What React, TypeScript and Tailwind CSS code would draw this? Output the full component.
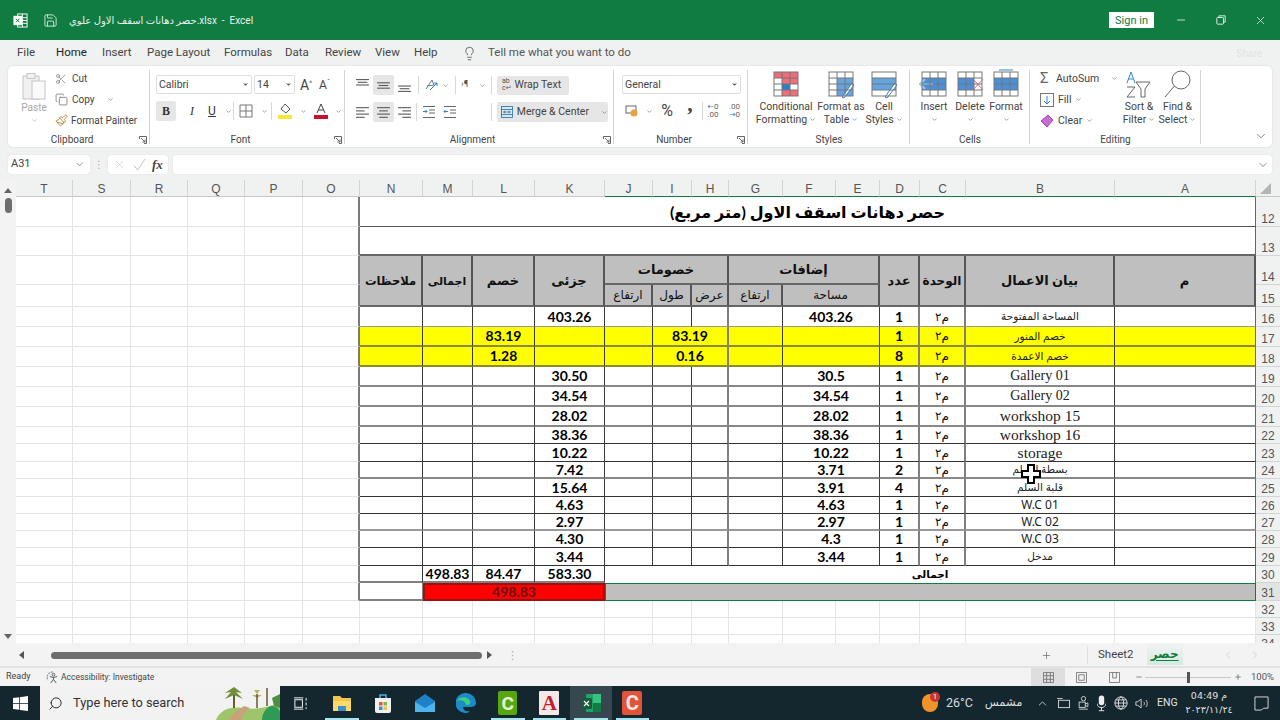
import { ReactNode } from 'react';
import { ChevronDown, ChevronLeft, ChevronRight, Copy, Lightbulb, Minus, Paintbrush, Plus, Save, Scissors, Search, X } from 'lucide-react';

function Dd({ className = '' }: { className?: string }) {
  return <ChevronDown className={'w-[7px] h-[7px] text-[#666] shrink-0 ' + className} strokeWidth={2} />;
}

function Group({ label, width, launcher, children }: { label: string; width: string; launcher?: boolean; children: ReactNode }) {
  return (
    <div className={width + ' relative flex flex-col shrink-0 h-[79px] mt-[2px]'}>
      <div className="flex-1 min-h-0">{children}</div>
      <div className={'h-[14px] flex items-center justify-center text-[10px] leading-none text-[#444] ' + (launcher ? 'pr-[14px]' : '')}>{label}</div>
      <div className="absolute right-0 top-[2px] bottom-[3px] w-px bg-[#d4d4d4]" />
      {launcher && (
        <svg viewBox="0 0 8 8" className="absolute right-[3px] bottom-[3px] w-[8px] h-[8px] text-[#666]" fill="none" stroke="currentColor">
          <path d="M.5 3V.5h7v7H5M2 2l4 4M6 3.5V6H3.5" />
        </svg>
      )}
    </div>
  );
}

function AlignLines({ kind, v = 'c' }: { kind: 'l' | 'c' | 'r'; v?: 't' | 'm' | 'b' | 'c' }) {
  const x = (w: number) => (kind === 'l' ? 1 : kind === 'c' ? 7 - w / 2 : 13 - w);
  const y0 = v === 't' ? 1 : v === 'm' ? 4 : v === 'b' ? 7 : 2;
  return (
    <svg viewBox="0 0 14 14" className="w-[15px] h-[15px] text-[#555]" stroke="currentColor" fill="none">
      {(v === 'c' ? [12, 8, 12, 8] : [12, 9, 12]).map((w, i) => (
        <path key={i} d={'M' + x(w) + ' ' + (y0 + 0.5 + i * (v === 'c' ? 3 : 2.5)) + 'h' + w} />
      ))}
    </svg>
  );
}

function MiniTable({ children, cols = 3 }: { children?: ReactNode; cols?: number }) {
  return (
    <svg viewBox="0 0 30 30" className="w-[30px] h-[30px]">
      {children}
      <g fill="none" stroke="#777">
        <rect x="3" y="3" width="24" height="24" />
        {cols === 3 && <path d="M11 3v24M19 3v24" />}
        <path d="M3 9h24M3 15h24M3 21h24" />
      </g>
    </svg>
  );
}

function Clipboard() {
  return (
    <Group label="Clipboard" width="w-[142px]" launcher>
      <div className="flex">
        <div className="w-[52px] -mr-[5px] flex flex-col items-center pt-[4px]">
          <svg viewBox="0 0 24 28" className="w-[24px] h-[28px]" fill="#f1f1f1" stroke="#c4c4c4">
            <rect x="1" y="4" width="16" height="23" />
            <rect x="5" y="1.5" width="8" height="5" />
            <rect x="10" y="9" width="13" height="18" fill="#fafafa" />
          </svg>
          <span className="text-[10px] leading-none mt-[3px] text-[#a8a8a8]">Paste</span>
          <Dd className="mt-[4px] text-[#aaa]" />
        </div>
        <div className="text-[10px] text-[#444]">
          <div className="h-[21px] flex items-center gap-[5px]"><Scissors className="w-[12px] h-[12px] text-[#666]" strokeWidth={1.2} />Cut</div>
          <div className="h-[21px] flex items-center gap-[4px]"><Copy className="w-[13px] h-[13px] text-[#555]" strokeWidth={1.2} />Copy<Dd className="ml-[8px]" /></div>
          <div className="h-[21px] flex items-center gap-[3px]"><Paintbrush className="w-[13px] h-[13px] text-[#b07a20]" strokeWidth={1.5} />Format Painter</div>
        </div>
      </div>
    </Group>
  );
}

function IconCell({ width = 'w-[21px]', on, children }: { width?: string; on?: boolean; children: ReactNode }) {
  return <div className={width + ' h-[20px] flex items-center justify-center rounded-[2px] shrink-0 ' + (on ? 'bg-[#e6e6e6]' : '')}>{children}</div>;
}

function FontGroup() {
  return (
    <Group label="Font" width="w-[195px]" launcher>
      <div className="pl-[6px] pt-[7px]">
        <div className="flex items-center h-[19px]">
          <div className="w-[96px] h-[19px] border border-[#dedede] rounded-[2px] flex items-center justify-between px-[2px] text-[10.5px] text-[#444]">Calibri<ChevronDown className="w-[7px] h-[7px] fill-[#555]" /></div>
          <div className="ml-[2px] w-[41px] h-[19px] border border-[#dedede] rounded-[2px] flex items-center justify-between px-[2px] text-[10.5px] text-[#444]">14<ChevronDown className="w-[7px] h-[7px] fill-[#555]" /></div>
          <span className="ml-[5px] text-[14px] leading-none text-[#444]">A<sup className="text-[7px]">^</sup></span>
          <span className="ml-[7px] text-[12px] leading-none text-[#444]">A<sup className="text-[7px]">ˇ</sup></span>
        </div>
        <div className="flex items-center h-[20px] mt-[7px] text-[12px] text-[#333]">
          <IconCell width="w-[20px]" on><span className="font-bold font-['Liberation_Serif',serif]">B</span></IconCell>
          <IconCell width="w-[22px]"><span className="italic ml-[10px] font-['Liberation_Serif',serif]">I</span></IconCell>
          <IconCell width="w-[20px]"><span className="underline ml-[8px]">U</span></IconCell>
          <IconCell width="w-[14px]"><Dd className="ml-[6px]" /></IconCell>
          <div className="w-px h-[18px] ml-[1px] bg-[#d8d8d8]" />
          <IconCell width="w-[24px]">
            <svg viewBox="0 0 14 14" className="w-[14px] h-[14px]" fill="none" stroke="#777"><path d="M1 1h12v12H1zM7 1v12M1 7h12" /></svg>
          </IconCell>
          <IconCell width="w-[12px]"><Dd /></IconCell>
          <div className="w-px h-[18px] ml-[1px] bg-[#d8d8d8]" />
          <IconCell width="w-[26px]">
            <svg viewBox="0 0 14 16" className="w-[14px] h-[16px]"><path d="M7 1l5 5-4 4-5-4z" fill="none" stroke="#555" /><rect y="12" width="14" height="4" fill="#f5e836" /></svg>
          </IconCell>
          <IconCell width="w-[10px]"><Dd /></IconCell>
          <IconCell width="w-[26px]">
            <svg viewBox="0 0 14 16" className="w-[14px] h-[16px]"><path d="M3 10L7 1l4 9M4.5 7h5" fill="none" stroke="#444" /><rect y="12" width="14" height="4" fill="#c8102e" /></svg>
          </IconCell>
          <IconCell width="w-[8px]"><Dd /></IconCell>
        </div>
      </div>
    </Group>
  );
}

function Alignment() {
  return (
    <Group label="Alignment" width="w-[269px]" launcher>
      <div className="flex pl-[7px] pt-[7px]">
        <div>
          <div className="flex items-center h-[20px]">
            <IconCell><AlignLines kind="c" v="t" /></IconCell>
            <IconCell on><AlignLines kind="c" v="m" /></IconCell>
            <IconCell><AlignLines kind="c" v="b" /></IconCell>
            <div className="w-px h-[18px] bg-[#d8d8d8] mx-[3px]" />
            <IconCell width="w-[18px]">
              <svg viewBox="0 0 14 14" className="w-[14px] h-[14px]" fill="none"><path d="M2 11L8 2l2 5-7 1" stroke="#777" /><path d="M6 12l7-7M10 5h3v3" stroke="#2b88c8" /></svg>
            </IconCell>
            <IconCell width="w-[10px]"><Dd /></IconCell>
            <div className="w-px h-[18px] bg-[#d8d8d8] mx-[5px]" />
            <span className="text-[9px] w-[18px] text-[#555]">›¶</span>
            <Dd />
            <div className="w-px h-[18px] bg-[#d8d8d8] ml-[5px] mr-[5px]" />
            <div className="w-[72px] h-[19px] bg-[#e6e6e6] rounded-[2px] flex items-center pl-[5px] gap-[3px] text-[10.5px] text-[#444] whitespace-nowrap">
              <span className="text-[7px] leading-[7px] text-[#555]">ab<br />c↵</span>Wrap Text
            </div>
          </div>
          <div className="flex items-center h-[20px] mt-[7px]">
            <IconCell><AlignLines kind="l" /></IconCell>
            <IconCell on><AlignLines kind="c" /></IconCell>
            <IconCell><AlignLines kind="r" /></IconCell>
            <div className="w-px h-[18px] bg-[#d8d8d8] mx-[1px]" />
            <IconCell>
              <svg viewBox="0 0 14 14" className="w-[14px] h-[14px]" fill="none"><path d="M1 1.5h12M7 5h6M7 8h6M1 12.5h12" stroke="#666" /><path d="M1 6.5h4M3.5 5l1.5 1.5L3.5 8" stroke="#2b88c8" /></svg>
            </IconCell>
            <IconCell>
              <svg viewBox="0 0 14 14" className="w-[14px] h-[14px]" fill="none"><path d="M1 1.5h12M7 5h6M7 8h6M1 12.5h12" stroke="#666" /><path d="M5 6.5H1M2.5 5L1 6.5 2.5 8" stroke="#2b88c8" /></svg>
            </IconCell>
            <div className="w-px h-[18px] bg-[#d8d8d8] ml-[31px] mr-[5px]" />
            <div className="w-[111px] h-[20px] bg-[#e6e6e6] rounded-[2px] flex items-center pl-[4px] gap-[4px] text-[10.5px] text-[#444] whitespace-nowrap">
              <svg viewBox="0 0 14 14" className="w-[14px] h-[14px]" fill="none" stroke="#1f78b4"><rect x=".5" y=".5" width="13" height="13" /><path d="M.5 4h13M.5 10h13M3 7h8M3 7l2-1.5M3 7l2 1.5M11 7L9 5.5M11 7L9 8.5" /></svg>
              Merge &amp; Center<Dd className="ml-[8px]" />
            </div>
          </div>
        </div>
      </div>
    </Group>
  );
}

function NumberGroup() {
  return (
    <Group label="Number" width="w-[134px]" launcher>
      <div className="pl-[8px] pt-[7px]">
        <div className="w-[119px] h-[19px] border border-[#dedede] rounded-[2px] flex items-center justify-between px-[2px] text-[10.5px] text-[#444]">General<ChevronDown className="w-[7px] h-[7px] fill-[#555]" /></div>
        <div className="flex items-center h-[20px] mt-[7px] text-[#444]">
          <IconCell width="w-[20px]">
            <svg viewBox="0 0 14 14" className="w-[14px] h-[14px]" fill="none"><rect x="1" y="2" width="10" height="7" stroke="#666" /><circle cx="9" cy="9" r="3.5" fill="#e9a13b" /></svg>
          </IconCell>
          <IconCell width="w-[14px]"><Dd /></IconCell>
          <IconCell width="w-[22px]"><span className="text-[16px] leading-none">%</span></IconCell>
          <IconCell width="w-[24px]"><span className="text-[22px] -mt-[14px] font-bold leading-none font-['Liberation_Serif',serif]">,</span></IconCell>
          <div className="w-px h-[18px] bg-[#d8d8d8]" />
          <IconCell width="w-[20px]"><span className="text-[8px] leading-[8px] text-center text-[#666]"><span className="text-[#2b88c8]">←</span>0<br />.00</span></IconCell>
          <IconCell width="w-[23px]"><span className="text-[8px] leading-[8px] text-center text-[#666]">.00<br /><span className="text-[#2b88c8]">→</span>0</span></IconCell>
        </div>
      </div>
    </Group>
  );
}

function BigBtn({ width, icon, l1, l2, dd }: { width: string; icon: ReactNode; l1: string; l2?: string; dd?: boolean }) {
  return (
    <div className={width + ' flex flex-col items-center text-[10.5px] leading-[13px] text-[#444] shrink-0'}>
      <div className="h-[30px] flex items-center">{icon}</div>
      <div className="mt-[1px] whitespace-nowrap">{l1}</div>
      <div className="flex items-center gap-[2px] h-[13px]">{l2}{dd && <Dd />}</div>
    </div>
  );
}

function Styles() {
  return (
    <Group label="Styles" width="w-[162px]">
      <div className="flex pl-[4px] pt-[1px]">
        <BigBtn width="w-[68px]" l1="Conditional" l2="Formatting" dd icon={
          <MiniTable><rect x="3" y="3" width="24" height="6" fill="#ef6d78" /><rect x="11" y="9" width="16" height="6" fill="#ef6d78" /><rect x="11" y="15" width="8" height="6" fill="#2b7cd3" /><rect x="11" y="21" width="16" height="6" fill="#ef6d78" /></MiniTable>
        } />
        <BigBtn width="w-[42px]" l1="Format as" l2="Table" dd icon={
          <MiniTable><rect x="11" y="9" width="16" height="18" fill="#64a5e0" /><path d="M16 28l10-14 2 2-10 13z" fill="#fff" stroke="#3d7dbb" /></MiniTable>
        } />
        <BigBtn width="w-[44px]" l1="Cell" l2="Styles" dd icon={
          <MiniTable cols={0}><rect x="3" y="9" width="24" height="12" fill="#64a5e0" /><path d="M16 28l10-14 2 2-10 13z" fill="#fff" stroke="#3d7dbb" /></MiniTable>
        } />
      </div>
    </Group>
  );
}

function Cells() {
  return (
    <Group label="Cells" width="w-[120px]">
      <div className="flex pl-[6px] pt-[1px]">
        <BigBtn width="w-[36px]" l1="Insert" dd icon={
          <MiniTable><rect x="3" y="9" width="24" height="12" fill="#4a90d9" /><path d="M14 15H1M6 10l-5 5 5 5" fill="none" stroke="#9bc8ee" strokeWidth="2" /></MiniTable>
        } />
        <BigBtn width="w-[36px]" l1="Delete" dd icon={
          <MiniTable><rect x="3" y="9" width="16" height="12" fill="#4a90d9" /><path d="M18 10l10 11M28 10L18 21" stroke="#e06c75" /></MiniTable>
        } />
        <BigBtn width="w-[36px]" l1="Format" dd icon={
          <MiniTable><rect x="3" y="9" width="24" height="12" fill="#4a90d9" /><path d="M8 1h14" stroke="#2b88c8" /></MiniTable>
        } />
      </div>
    </Group>
  );
}

function Editing() {
  return (
    <Group label="Editing" width="w-[171px]">
      <div className="flex pl-[10px]">
        <div className="w-[79px] text-[10.5px] text-[#444]">
          <div className="h-[21px] flex items-center gap-[4px]"><span className="text-[15px] leading-none text-[#666] w-[12px]">Σ</span>AutoSum<Dd className="ml-[8px]" /></div>
          <div className="h-[21px] flex items-center gap-[4px]">
            <svg viewBox="0 0 14 14" className="w-[14px] h-[14px]" fill="none"><rect x=".5" y=".5" width="13" height="13" stroke="#777" /><path d="M7 3v8M4 8l3 3 3-3" stroke="#2b88c8" /></svg>
            Fill<Dd />
          </div>
          <div className="h-[21px] flex items-center gap-[4px]">
            <svg viewBox="0 0 14 14" className="w-[14px] h-[14px]"><path d="M8 1l5 5-6 7-6-6z" fill="#c86dd7" stroke="#9a4aa8" /></svg>
            Clear<Dd />
          </div>
        </div>
        <div className="flex pt-[1px]">
          <BigBtn width="w-[40px]" l1="Sort &" l2="Filter" dd icon={
            <svg viewBox="0 0 30 30" className="w-[30px] h-[30px]" fill="none">
              <path d="M3 14L7 3l4 11M4.5 10h5" stroke="#2b88c8" /><path d="M3 18h8l-8 10h8" stroke="#666" /><path d="M12 13h14l-5 7v8h-4v-8z" stroke="#666" />
            </svg>
          } />
          <BigBtn width="w-[37px]" l1="Find &" l2="Select" dd icon={
            <svg viewBox="0 0 30 30" className="w-[30px] h-[30px]" fill="none" stroke="#666"><circle cx="18" cy="11" r="9" /><path d="M11.5 17L2 28" /></svg>
          } />
        </div>
      </div>
    </Group>
  );
}

function Ribbon() {
  return (
    <div className="mx-[8px] h-[81px] rounded-[5px] bg-white flex shadow-[0_0_2px_rgba(0,0,0,0.12)] shrink-0">
      <Clipboard />
      <FontGroup />
      <Alignment />
      <NumberGroup />
      <Styles />
      <Cells />
      <Editing />
      <div className="flex-1 flex items-end justify-end pr-[4px] pb-[4px]">
        <ChevronDown className="w-[14px] h-[14px] text-[#555]" strokeWidth={1.2} />
      </div>
    </div>
  );
}

const tabs = [
  ['File', 'w-[39px]'], ['Home', 'w-[46px] text-[#222]'], ['Insert', 'w-[45px]'], ['Page Layout', 'w-[77px]'], ['Formulas', 'w-[61px]'],
  ['Data', 'w-[40px]'], ['Review', 'w-[50px]'], ['View', 'w-[39px]'], ['Help', 'w-[48px]'],
];

const sheetCols = [
  ['T', 'w-[57px]'], ['S', 'w-[58px]'], ['R', 'w-[57px]'], ['Q', 'w-[57px]'], ['P', 'w-[58px]'], ['O', 'w-[57px]'],
  ['N', 'w-[63px]'], ['M', 'w-[50px]'], ['L', 'w-[62px]'], ['K', 'w-[70px]'], ['J', 'w-[48px]'], ['I', 'w-[39px]'], ['H', 'w-[37px]'],
  ['G', 'w-[54px]'], ['F', 'w-[53px]'], ['E', 'w-[44px]'], ['D', 'w-[40px]'], ['C', 'w-[46px]'], ['B', 'w-[149px]'], ['A', 'w-[141px]'],
];

const grid = 'border-r border-b border-[#e4e4e4]';
const rowHead = "w-[24px] bg-[#f0f2f1] border-b border-[#d4d4d4] text-[12px] leading-none text-center align-bottom pb-[1px] text-[#555] font-['Liberation_Sans',sans-serif]";

function LeftCells() {
  return (
    <>
      <td className={grid} /><td className={grid} /><td className={grid} /><td className={grid} /><td className={grid} />
      <td className="border-r-2 border-r-[#7a7a7a] border-b border-b-[#e4e4e4]" />
    </>
  );
}

const thin = 'border-r border-r-[#3a3a3a] ';
const thick = 'border-r-2 border-r-[#808080] ';
const head = 'bg-[#bfbfbf] border-r-2 border-r-[#555] border-b-2 border-b-[#666] leading-none text-[#111] text-center align-middle ';
const big = head + 'font-bold text-[13px]';
const sub = head + 'font-normal text-[12px]';
const num = 'text-center text-[14px] leading-none font-bold text-black ';

const dataRows = [
  { n: 16, h: 'h-[20px]', line: 'border-b border-b-[#999] ', k: '403.26', f: '403.26', d: '1', b: 'المساحة المفتوحة', t: 'text-[10.5px] text-[#222]' },
  { n: 17, h: 'h-[20px]', line: 'border-b-2 border-b-[#8c8c2e] ', l: '83.19', ih: '83.19', d: '1', b: 'خصم المنور', t: 'text-[10.5px] text-[#222]', y: true },
  { n: 18, h: 'h-[20px]', line: 'border-b-2 border-b-[#8c8c2e] ', l: '1.28', ih: '0.16', d: '8', b: 'خصم الاعمدة', t: 'text-[10.5px] text-[#222]', y: true },
  { n: 19, h: 'h-[20px]', line: 'border-b-2 border-b-[#888] ', k: '30.50', f: '30.5', d: '1', b: 'Gallery 01', t: "text-[14px] text-[#222] font-['Liberation_Serif',serif]" },
  { n: 20, h: 'h-[20px]', line: 'border-b-2 border-b-[#888] ', k: '34.54', f: '34.54', d: '1', b: 'Gallery 02', t: "text-[14px] text-[#222] font-['Liberation_Serif',serif]" },
  { n: 21, h: 'h-[20px]', line: 'border-b-2 border-b-[#888] ', k: '28.02', f: '28.02', d: '1', b: 'workshop 15', t: "text-[15.5px] text-[#222] font-['Liberation_Serif',serif]" },
  { n: 22, h: 'h-[17px]', line: 'border-b border-b-[#333] ', k: '38.36', f: '38.36', d: '1', b: 'workshop 16', t: "text-[15.5px] text-[#222] font-['Liberation_Serif',serif]" },
  { n: 23, h: 'h-[18px]', line: 'border-b border-b-[#333] ', k: '10.22', f: '10.22', d: '1', b: 'storage', t: "text-[15.5px] text-[#222] font-['Liberation_Serif',serif]" },
  { n: 24, h: 'h-[17px]', line: 'border-b-2 border-b-[#888] ', k: '7.42', f: '3.71', d: '2', b: 'بسطة السلم', t: 'text-[10.5px] text-[#222]' },
  { n: 25, h: 'h-[18px]', line: 'border-b border-b-[#333] ', k: '15.64', f: '3.91', d: '4', b: 'قلبة السلم', t: 'text-[10.5px] text-[#222]' },
  { n: 26, h: 'h-[17px]', line: 'border-b border-b-[#333] ', k: '4.63', f: '4.63', d: '1', b: 'W.C 01', t: "text-[12px] text-[#222] font-['Noto_Sans',sans-serif]" },
  { n: 27, h: 'h-[17px]', line: 'border-b-2 border-b-[#999] ', k: '2.97', f: '2.97', d: '1', b: 'W.C 02', t: "text-[12px] text-[#222] font-['Noto_Sans',sans-serif]" },
  { n: 28, h: 'h-[17px]', line: 'border-b border-b-[#333] ', k: '4.30', f: '4.3', d: '1', b: 'W.C 03', t: "text-[12px] text-[#222] font-['Noto_Sans',sans-serif]" },
  { n: 29, h: 'h-[18px]', line: 'border-b border-b-[#333] ', k: '3.44', f: '3.44', d: '1', b: 'مدخل', t: 'text-[10.5px] text-[#222]' },
];

function DataRow({ r }: { r: (typeof dataRows)[number] }) {
  const bg = r.y ? 'bg-[#ffff00] ' : '';
  const c = r.line + bg;
  return (
    <tr className={r.h}>
      <LeftCells />
      <td className={thin + c} />
      <td className={thin + c} />
      <td className={thin + c + num}>{r.l}</td>
      <td className={thin + c + num}>{r.k}</td>
      <td className={thin + c} />
      {r.ih ? (
        <td colSpan={2} className={thick + c + num}>{r.ih}</td>
      ) : (
        <>
          <td className={thin + c} />
          <td className={thick + c} />
        </>
      )}
      <td className={thin + c} />
      <td colSpan={2} className={thin + c + num}>{r.f}</td>
      <td className={thick + c + num}>{r.d}</td>
      <td className={thick + c + 'text-center text-[12px] leading-none text-[#111]'}>م٢</td>
      <td className={thin + c + 'text-center leading-none ' + r.t}>{r.b}</td>
      <td className={'border-r border-r-[#666] ' + c} />
      <td className={rowHead}>{r.n}</td>
    </tr>
  );
}

function Sheet() {
  return (
    <div className="flex h-[463px] overflow-hidden bg-white shrink-0">
      <div className="w-[16px] shrink-0 bg-[#f3f3f3] flex flex-col items-center">
        <div className="w-0 h-0 mt-[8px] border-x-[4px] border-x-transparent border-b-[5px] border-b-[#666]" />
        <div className="w-[7px] h-[15px] mt-[5px] rounded-full bg-[#6e6e6e]" />
        <div className="flex-1" />
        <div className="w-0 h-0 mb-[4px] border-x-[4px] border-x-transparent border-t-[5px] border-t-[#666]" />
      </div>
      <table className="table-fixed border-separate border-spacing-0 w-[1264px] h-fit font-['Lato','DejaVu_Sans',sans-serif]">
        <colgroup>
          {sheetCols.map(([n, w]) => <col key={n} className={w} />)}
          <col className="w-[24px]" />
        </colgroup>
        <thead>
          <tr className="h-[17px]">
            {sheetCols.map(([n], i) => (
              <th key={n} className={"bg-[#f0f2f1] border-r border-r-[#d4d4d4] border-b pt-[1px] font-normal text-[12px] leading-none text-[#555] font-['Liberation_Sans',sans-serif] " + (i >= 10 ? 'border-b-[#107c41]' : 'border-b-[#c8c8c8]')}>{n}</th>
            ))}
            <th className="bg-[#f0f2f1] border-b border-b-[#c8c8c8]">
              <div className="ml-auto mr-[9px] w-0 h-0 border-l-[11px] border-l-transparent border-b-[11px] border-b-[#b4b4b4]" />
            </th>
          </tr>
        </thead>
        <tbody>
          <tr className="h-[30px]">
            <LeftCells />
            <td colSpan={14} className="border-r border-r-[#666] border-b border-b-[#555] text-center font-bold text-[16px] leading-none text-black">حصر دهانات اسقف الاول (متر مربع)</td>
            <td className={rowHead}>12</td>
          </tr>
          <tr className="h-[29px]">
            <LeftCells />
            <td colSpan={14} className="border-r border-r-[#666] border-b-2 border-b-[#666]" />
            <td className={rowHead}>13</td>
          </tr>
          <tr className="h-[29px]">
            <LeftCells />
            <td rowSpan={2} className={head + 'font-bold text-[11.5px]'}>ملاحظات</td>
            <td rowSpan={2} className={head + 'font-bold text-[11px]'}>اجمالى</td>
            <td rowSpan={2} className={big}>خصم</td>
            <td rowSpan={2} className={big}>جزئى</td>
            <td colSpan={3} className={big}>خصومات</td>
            <td colSpan={3} className={big}>إضافات</td>
            <td rowSpan={2} className={big}>عدد</td>
            <td rowSpan={2} className={head + 'font-bold text-[12px]'}>الوحدة</td>
            <td rowSpan={2} className={big}>بيان الاعمال</td>
            <td rowSpan={2} className={big}>م</td>
            <td className={rowHead}>14</td>
          </tr>
          <tr className="h-[22px]">
            <LeftCells />
            <td className={sub}>ارتفاع</td>
            <td className={sub}>طول</td>
            <td className={sub}>عرض</td>
            <td className={sub}>ارتفاع</td>
            <td colSpan={2} className={sub}>مساحة</td>
            <td className={rowHead}>15</td>
          </tr>
          {dataRows.map((r) => <DataRow key={r.n} r={r} />)}
          <tr className="h-[17px]">
            <LeftCells />
            <td className={thin + 'border-b-2 border-b-[#808080]'} />
            <td className={thin + 'border-b-2 border-b-[#808080] ' + num}>498.83</td>
            <td className={thin + 'border-b-2 border-b-[#808080] ' + num}>84.47</td>
            <td className={thin + 'border-b-2 border-b-[#808080] ' + num}>583.30</td>
            <td colSpan={10} className="border-r border-r-[#666] text-center font-bold text-[10.5px] leading-none text-black">اجمالى</td>
            <td className={rowHead}>30</td>
          </tr>
          <tr className="h-[18px]">
            <LeftCells />
            <td className="border-b-2 border-b-[#808080] border-r border-r-[#808080]" />
            <td colSpan={3} className="bg-[#ff0000] border-2 border-[#a01010] text-center text-[14px] leading-none font-bold text-[#6a1010]">498.83</td>
            <td colSpan={10} className="bg-[#bfbfbf] border border-[#107c41]" />
            <td className="w-[24px] bg-[#e2e4e3] border-b border-[#d4d4d4] text-[12px] leading-none text-center align-bottom pb-[1px] text-[#555] font-['Liberation_Sans',sans-serif]">31</td>
          </tr>
          {[32, 33, 34].map((n) => (
            <tr key={n} className="h-[17px]">
              {sheetCols.map(([c]) => <td key={c} className={grid} />)}
              <td className={rowHead}>{n}</td>
            </tr>
          ))}
        </tbody>
      </table>
    </div>
  );
}

function TaskIcon({ on, line, children }: { on?: boolean; line?: boolean; children: ReactNode }) {
  return (
    <div className={'w-[41.5px] h-[34px] relative flex items-center justify-center shrink-0 ' + (on ? 'bg-[#37474f]' : '')}>
      {children}
      {line && <div className="absolute bottom-0 left-[4px] right-[4px] h-[2px] bg-[#a8e4ee]" />}
    </div>
  );
}

function Taskbar() {
  return (
    <div className="h-[34px] bg-[#14262e] flex items-center text-white shrink-0">
      <div className="w-[40px] flex justify-center">
        <svg viewBox="0 0 16 16" className="w-[15px] h-[15px]" fill="#fff"><path d="M0 2.2l6.5-.9v6.3H0zM7.3 1.2L16 0v7.6H7.3zM0 8.4h6.5v6.3L0 13.8zM7.3 8.4H16V16l-8.7-1.2z" /></svg>
      </div>
      <div className="w-[240px] h-[34px] bg-[#f2f2f2] flex items-center pl-[8px] text-[#333] relative">
        <Search className="w-[15px] h-[15px] -scale-x-100 text-[#222]" strokeWidth={1.5} />
        <span className="ml-[10px] text-[12.8px]">Type here to search</span>
        <svg viewBox="0 0 64 34" className="absolute right-0 top-0 w-[64px] h-[34px]">
          <path d="M0 34c4-10 14-14 26-12s26 0 38-6v18z" fill="#9ec56a" />
          <path d="M12 34c6-8 10-10 16-14l6 2c-6 4-8 8-8 12z" fill="#c9a27a" />
          <path d="M18 2v20" stroke="#6b5a2d" strokeWidth="2" />
          <path d="M18 1l8 6-6-1 7 7-9-4-9 4 6-7-6 1z" fill="#6f8f3a" />
          <path d="M38 4h6l-3 4zM36 9h10l-5 3z" fill="#b9b35a" />
          <path d="M41 8v14M51 2v18" stroke="#6b5a2d" strokeWidth="1.5" />
          <path d="M46 34c0-8 6-14 10-14s8 4 8 6v8z" fill="#2f9a55" />
          <path d="M56 12l8-4v14l-6-2z" fill="#4b8f3f" />
        </svg>
      </div>
      <div className="w-[41px] flex justify-center">
        <svg viewBox="0 0 16 16" className="w-[15px] h-[15px]" fill="none" stroke="#fff"><rect x="2" y="4" width="8" height="8" /><path d="M1 2h10M1 14h10M14 2v3M14 7v3M14 12v2" /></svg>
      </div>
      <TaskIcon line>
        <svg viewBox="0 0 20 18" className="w-[20px] h-[18px]"><path d="M1 2h7l2 2h9v13H1z" fill="#f3c44b" /><path d="M1 7h18v10H1z" fill="#fbd96a" /><rect x="6" y="12" width="8" height="5" fill="#3a8fd1" /></svg>
      </TaskIcon>
      <TaskIcon>
        <svg viewBox="0 0 18 20" className="w-[18px] h-[20px]"><path d="M1 5h16v13a2 2 0 01-2 2H3a2 2 0 01-2-2z" fill="#f0f0f0" /><path d="M6 5V2h6v3" fill="none" stroke="#4fb3d9" strokeWidth="1.5" /><rect x="5" y="9" width="3.5" height="3.5" fill="#e8543a" /><rect x="9.5" y="9" width="3.5" height="3.5" fill="#7fba3a" /><rect x="5" y="13.5" width="3.5" height="3.5" fill="#3a8fd1" /><rect x="9.5" y="13.5" width="3.5" height="3.5" fill="#f3c44b" /></svg>
      </TaskIcon>
      <TaskIcon>
        <svg viewBox="0 0 20 20" className="w-[20px] h-[20px]"><path d="M10 1l10 7v11H0V8z" fill="#1f7fc7" /><path d="M0 9l10 6 10-6v10H0z" fill="#4fb4ea" /></svg>
      </TaskIcon>
      <TaskIcon>
        <svg viewBox="0 0 20 20" className="w-[20px] h-[20px]"><path d="M10 0a10 10 0 0110 10c0 3-3 4-6 4H7c0 3 3 5 7 4-2 2-3 2-5 2A10 10 0 0110 0z" fill="#1b8ccb" /><path d="M1 8c2-4 10-6 13 0 1 3-1 4-4 4 0-4-6-6-9-4z" fill="#3fd07e" /></svg>
      </TaskIcon>
      <TaskIcon line>
        <div className="w-[19px] h-[24px] rounded-[2px] bg-[#57a70f] flex items-center justify-center text-[19px] leading-none font-bold text-[#e8f5d5]">C</div>
      </TaskIcon>
      <TaskIcon line>
        <div className="w-[20px] h-[24px] rounded-[1px] bg-[#f3e9e6] flex items-center justify-center text-[21px] leading-none font-bold text-[#c41e2e] font-['Liberation_Serif',serif]">A</div>
      </TaskIcon>
      <TaskIcon on line>
        <svg viewBox="0 0 20 20" className="w-[20px] h-[20px]"><rect x="5" y="1" width="15" height="18" rx="1" fill="#21a366" /><rect x="12" y="1" width="8" height="9" fill="#33c481" /><rect x="12" y="10" width="8" height="9" fill="#107c41" /><rect y="5" width="11" height="11" rx="1" fill="#185c37" /><path d="M3 8l5 5M8 8l-5 5" stroke="#fff" strokeWidth="1.2" /></svg>
      </TaskIcon>
      <TaskIcon line>
        <div className="w-[20px] h-[24px] rounded-[2px] bg-[#e2533a] flex items-center justify-center text-[20px] leading-none font-bold text-[#fde8e2]">C</div>
      </TaskIcon>
      <div className="flex-1" />
      <div className="relative w-[16px] h-[18px] rounded-full bg-[#f0932b] mr-[8px]">
        <div className="absolute -top-[2px] -right-[2px] w-[10px] h-[10px] rounded-full bg-[#c8372d] text-[7px] leading-[10px] text-center">1</div>
      </div>
      <div className="text-[12.5px] text-[#d8dde0] w-[33px]">26°C</div>
      <div className="w-[49px] text-[11.5px] text-center font-['DejaVu_Sans',sans-serif] text-[#d8dde0]">مشمس</div>
      <ChevronDown className="w-[13px] h-[13px] rotate-180 ml-[8px] text-[#ddd]" strokeWidth={1.5} />
      <svg viewBox="0 0 14 12" className="ml-[8px] w-[13px] h-[11px]" fill="none" stroke="#ddd"><rect x="1.5" y="2.5" width="12" height="8" /><path d="M0 .5h6" /></svg>
      <svg viewBox="0 0 12 16" className="ml-[8px] w-[11px] h-[14px]" fill="none" stroke="#ddd"><circle cx="6" cy="3" r="2.5" /><rect x="1" y="7" width="7" height="6" /><path d="M8 9l3-1v4l-3-1M1 15h10" /></svg>
      <svg viewBox="0 0 10 18" className="ml-[8px] w-[9px] h-[17px]" fill="#eee"><rect x="2" width="6" height="11" rx="3" /><path d="M0 9c0 6 10 6 10 0M5 13v4M2 17h6" stroke="#eee" fill="none" /></svg>
      <svg viewBox="0 0 16 16" className="ml-[8px] w-[14px] h-[14px]" fill="none" stroke="#eee"><circle cx="8" cy="8" r="7" /><ellipse cx="8" cy="8" rx="3" ry="7" /><path d="M1 8h14M2 4.5h12M2 11.5h12" /></svg>
      <svg viewBox="0 0 16 14" className="ml-[7px] w-[14px] h-[13px]" fill="none" stroke="#ddd"><path d="M1 5h2l4-3v10L3 9H1zM10 5c1 1 1 3 0 4M12.5 3c2 2 2 6 0 8" /></svg>
      <div className="ml-[8px] w-[20px] text-[10.5px] text-[#e0e0e0]">ENG</div>
      <div className="ml-[7px] w-[50px] text-center font-['DejaVu_Sans',sans-serif] text-[9.5px] leading-[14px] text-[#e0e0e0]">
        <div>04:49 م</div>
        <div>٢٠٢٣/١١/٢٤</div>
      </div>
      <div className="w-[46px] flex justify-center pl-[8px]">
        <svg viewBox="0 0 16 16" className="w-[15px] h-[15px]" fill="none" stroke="#ddd"><path d="M1 1h14v12h-5l-2 2H1z" /></svg>
      </div>
    </div>
  );
}

export default function App() {
  return (
    <div className="w-[1280px] h-[720px] relative overflow-hidden flex flex-col bg-[#f0f2f1] font-['Roboto','DejaVu_Sans',sans-serif]">
      {/* title bar */}
      <div className="h-[40px] bg-[#107c41] flex items-center text-white shrink-0">
        <div className="w-[40px] flex justify-center">
          <svg viewBox="0 0 16 16" className="w-[15px] h-[15px]" fill="none" stroke="#fff"><rect x="5" y="1" width="10" height="14" /><path d="M5 5h10M5 8h10M5 11h10M10 1v14" /><rect x="1" y="3.5" width="8" height="9" fill="#fff" /><path d="M3 6l4 4M7 6l-4 4" stroke="#107c41" /></svg>
        </div>
        <Save className="w-[15px] h-[15px] ml-[3px]" strokeWidth={1.2} />
        <div className="ml-[11px] text-[10px] whitespace-pre text-[#e7f2ec]">حصر دهانات اسقف الاول علوي.xlsx  -  Excel</div>
        <div className="flex-1" />
        <div className="w-[45px] h-[16px] bg-white text-[#107c41] text-[11px] flex items-center justify-center leading-none">Sign in</div>
        <Minus className="w-[12px] h-[12px] ml-[21px]" strokeWidth={1.5} />
        <svg viewBox="0 0 12 12" className="w-[10px] h-[10px] ml-[29px]" fill="none" stroke="#fff"><rect x="1" y="3" width="8" height="8" rx="1" /><path d="M3.5 3V1H11v7.5H9" /></svg>
        <X className="w-[13px] h-[13px] ml-[28px] mr-[13px]" strokeWidth={1.2} />
      </div>
      {/* menu tabs */}
      <div className="h-[26px] flex items-center pl-[17px] text-[11.5px] text-[#444] shrink-0">
        {tabs.map(([t, c]) => <span key={t} className={c}>{t}</span>)}
        <Lightbulb className="w-[15px] h-[15px] text-[#444] mr-[11px]" strokeWidth={1.2} />
        <span className="text-[#555]">Tell me what you want to do</span>
        <span className="ml-auto mr-[18px] text-[10px] text-[#e2e4e3]">Share</span>
      </div>
      <Ribbon />
      {/* formula bar */}
      <div className="h-[33px] px-[8px] pt-[2px] flex items-center shrink-0 text-[#444]">
        <div className="w-[82px] h-[19px] bg-white rounded-[3px] flex items-center justify-between px-[3px] text-[11px] shadow-[0_0_1px_rgba(0,0,0,0.2)]">A31<ChevronDown className="w-[11px] h-[11px] mr-[2px] text-[#666]" strokeWidth={1.5} /></div>
        <div className="w-[18px] text-center text-[#aaa] text-[10px]">⋮</div>
        <div className="w-[60px] h-[19px] bg-white rounded-[3px] flex items-center justify-around px-[2px] shadow-[0_0_1px_rgba(0,0,0,0.2)]">
          <X className="w-[13px] h-[13px] text-[#bdbdbd]" strokeWidth={1} />
          <svg viewBox="0 0 14 14" className="w-[13px] h-[13px]" fill="none" stroke="#bdbdbd"><path d="M1 8l4 5L13 1" /></svg>
          <span className="italic text-[13px] font-bold text-[#444] font-['Liberation_Serif',serif]">fx</span>
        </div>
        <div className="ml-[5px] flex-1 h-[19px] bg-white rounded-[3px] flex items-center justify-end pr-[3px] shadow-[0_0_1px_rgba(0,0,0,0.2)]">
          <ChevronDown className="w-[12px] h-[12px] text-[#666]" strokeWidth={1.5} />
        </div>
      </div>
      <Sheet />
      {/* horizontal scroll and sheet tabs */}
      <div className="h-[25px] pt-[1px] bg-[#f3f3f3] flex items-center border-b-2 border-[#e2e2e2] shrink-0">
        <div className="ml-[19px] w-0 h-0 border-y-[4px] border-y-transparent border-r-[5px] border-r-[#555]" />
        <div className="ml-[27px] w-[431px] h-[7px] rounded-full bg-[#6e6e6e]" />
        <div className="ml-[5px] w-0 h-0 border-y-[4px] border-y-transparent border-l-[5px] border-l-[#555]" />
        <div className="ml-[15px] text-[#aaa] text-[11px] leading-none">⋮</div>
        <Plus className="ml-[523px] w-[11px] h-[11px] text-[#666]" strokeWidth={1.5} />
        <div className="ml-[35px] w-px h-[18px] bg-[#e0e0e0]" />
        <div className="ml-[10px] text-[11.5px] text-[#444]">Sheet2</div>
        <div className="ml-[13px] h-[22px] w-[36px] -mt-[3px] bg-gradient-to-b from-[#f3f3f3] to-[#d4ebe0] flex items-center justify-center text-[12px] font-['DejaVu_Sans',sans-serif] font-bold text-[#107c41] underline decoration-[#107c41] underline-offset-2">حصر</div>
        <ChevronLeft className="ml-[39px] w-[12px] h-[12px] text-[#c8c8c8]" strokeWidth={1.5} />
        <ChevronRight className="ml-[15px] w-[12px] h-[12px] text-[#c8c8c8]" strokeWidth={1.5} />
      </div>
      {/* status bar */}
      <div className="h-[18px] bg-[#f3f3f3] flex items-center text-[#444] shrink-0">
        <span className="ml-[6px] w-[40px] text-[9px]">Ready</span>
        <svg viewBox="0 0 14 14" className="w-[13px] h-[13px]" fill="none" stroke="#555"><path d="M7 1a6 6 0 00-5 9" strokeDasharray="2 1" /><circle cx="8" cy="4" r="1.5" /><path d="M4 6l4 1 4-1M8 7v2l-3 4M8 9l3 4" /></svg>
        <span className="ml-[2px] text-[8.5px]">Accessibility: Investigate</span>
        <div className="flex-1" />
        <div className="w-[34px] h-[18px] bg-[#dedede] flex items-center justify-center">
          <svg viewBox="0 0 12 12" className="w-[11px] h-[11px]" fill="none" stroke="#777"><path d="M.5.5h11v11H.5zM4 .5v11M8 .5v11M.5 4h11M.5 8h11" /></svg>
        </div>
        <div className="w-[33px] flex justify-center">
          <svg viewBox="0 0 12 12" className="w-[11px] h-[11px]" fill="none" stroke="#777"><path d="M.5.5h11v11H.5zM3 3h6v6H3z" /></svg>
        </div>
        <div className="w-[33px] flex justify-center">
          <svg viewBox="0 0 12 12" className="w-[11px] h-[11px]" fill="none" stroke="#777"><path d="M.5.5h11v11H.5zM4 .5v6h4v-6" /></svg>
        </div>
        <Minus className="w-[8px] h-[8px] ml-[4px] text-[#555]" />
        <div className="ml-[2px] w-[86px] h-px bg-[#c8c8c8] relative">
          <div className="absolute left-[42px] -top-[5px] w-[3px] h-[11px] bg-[#555]" />
        </div>
        <Plus className="w-[8px] h-[8px] ml-[3px] text-[#555]" />
        <span className="ml-[9px] mr-[7px] w-[22px] text-[9.5px] text-[#555]">100%</span>
      </div>
      <Taskbar />
      {/* excel cell cursor */}
      <svg viewBox="0 0 20 20" className="absolute left-[1021px] top-[464px] w-[20px] h-[20px]" fill="#fff" stroke="#000" strokeWidth="2">
        <path d="M7 1h6v6h6v6h-6v6H7v-6H1V7h6z" />
      </svg>
    </div>
  );
}
